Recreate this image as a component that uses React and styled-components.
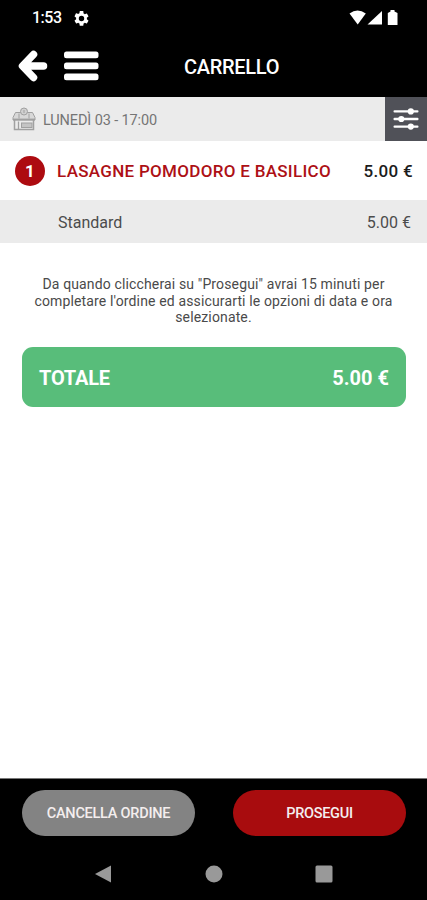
import styled, { createGlobalStyle } from "styled-components";

const GlobalStyle = createGlobalStyle`
  * {
    box-sizing: border-box;
  }
  body {
    margin: 0;
    background: #fff;
    font-family: Roboto, sans-serif;
  }
`;

const Screen = styled.div`
  display: flex;
  flex-direction: column;
  width: 427px;
  height: 900px;
  background: #fff;
`;

// status bar
const StatusBar = styled.div`
  display: flex;
  align-items: center;
  height: 36px;
  padding: 0 28px 0 32px;
  background: #000;
  color: #fff;
`;
const Clock = styled.span`
  font-size: 16px;
  line-height: 36px;
  font-weight: 500;
  letter-spacing: -0.5px;
  margin-right: 12px;
`;
const StatusIcons = styled.div`
  display: flex;
  margin-left: auto;
`;

// header
const Header = styled.header`
  display: flex;
  align-items: center;
  height: 61px;
  padding: 0 18px 2px;
  background: #000;
`;
const HeaderActions = styled.div`
  display: flex;
  align-items: center;
  gap: 16px;
`;
const IconButton = styled.button`
  display: flex;
  padding: 0;
  border: 0;
  background: none;
`;
const Title = styled.h1`
  margin: 2px 0 0 85px;
  color: #fff;
  font-size: 20px;
  line-height: 24px;
  font-weight: 500;
  letter-spacing: -0.3px;
`;

// pickup date
const DateBar = styled.div`
  display: flex;
  align-items: center;
  height: 44px;
  padding-left: 12px;
  background: #ebebeb;
`;
const DateText = styled.span`
  flex: 1;
  margin-left: 7px;
  padding-top: 2px;
  color: #757575;
  font-size: 14.5px;
  letter-spacing: -0.12px;
`;
const FilterButton = styled.button`
  display: flex;
  align-items: center;
  justify-content: center;
  width: 42px;
  height: 44px;
  padding: 0 1px 0 0;
  border: 0;
  background: #505158;
`;

// order lines
const ItemRow = styled.div`
  display: flex;
  align-items: center;
  height: 59px;
  padding: 0 14px 0 15px;
`;
const Quantity = styled.span`
  width: 30px;
  height: 30px;
  margin-right: 12px;
  border-radius: 50%;
  background: #ad0b10;
  color: #fff;
  font-size: 17px;
  line-height: 31px;
  font-weight: 700;
  text-align: center;
`;
const ItemName = styled.span`
  flex: 1;
  color: #ad1015;
  font-size: 17px;
  font-weight: 500;
  letter-spacing: 0.3px;
`;
const ItemPrice = styled.span`
  color: #1c1c1c;
  font-size: 17px;
  font-weight: 500;
  letter-spacing: 0.3px;
`;
const VariantRow = styled.div`
  display: flex;
  align-items: center;
  justify-content: space-between;
  height: 43px;
  padding: 2px 16px 0 58px;
  background: #ebebeb;
  color: #4c4c4c;
  font-size: 16px;
`;

const Note = styled.p`
  margin: 33px 30px 0;
  height: 51px;
  color: #4a4a4a;
  font-size: 14px;
  line-height: 16.6px;
  letter-spacing: 0.14px;
  text-align: center;
`;
const NoteLine = styled.span`
  display: block;
  white-space: nowrap;
`;

const Total = styled.div`
  display: flex;
  align-items: center;
  justify-content: space-between;
  height: 60px;
  margin: 20px 21px 0 22px;
  padding: 2px 17px 0;
  border-radius: 11px;
  background: #58bd7a;
  color: #fff;
  font-size: 20px;
  font-weight: 700;
`;
const TotalLabel = styled.span`
  letter-spacing: -0.2px;
`;

// bottom buttons
const Footer = styled.footer`
  display: flex;
  justify-content: space-between;
  height: 70px;
  margin-top: auto;
  padding: 11px 21px 0 22px;
  border-top: 1px solid #777;
  background: #000;
`;
const Button = styled.button`
  width: 173px;
  height: 46px;
  padding: 1px 0 0;
  border: 0;
  border-radius: 23px;
  background: ${(props) => (props.$primary ? "#a80c0e" : "#838383")};
  color: #f4eeee;
  font-family: inherit;
  font-size: 14.5px;
  font-weight: 500;
  letter-spacing: ${(props) => (props.$primary ? "-0.3px" : "-0.25px")};
`;

const NavBar = styled.nav`
  display: flex;
  align-items: center;
  justify-content: center;
  gap: 92px;
  height: 52px;
  background: #000;
`;

function Gear() {
  return (
    <svg width="15" height="15" viewBox="2 2 20 20" fill="#fff">
      <path d="M19.14 12.94c.04-.3.06-.61.06-.94s-.02-.64-.07-.94l2.03-1.58a.5.5 0 0 0 .12-.61l-1.92-3.32a.49.49 0 0 0-.59-.22l-2.39.96a7 7 0 0 0-1.62-.94l-.36-2.54A.48.48 0 0 0 13.92 2h-3.84a.48.48 0 0 0-.47.41l-.36 2.54c-.59.24-1.13.57-1.62.94l-2.39-.96a.49.49 0 0 0-.59.22L2.74 8.87a.48.48 0 0 0 .12.61l2.03 1.58a6 6 0 0 0 0 1.88l-2.03 1.58a.5.5 0 0 0-.12.61l1.92 3.32c.12.22.37.29.59.22l2.39-.96c.5.38 1.03.7 1.62.94l.36 2.54c.05.24.24.41.48.41h3.84c.24 0 .44-.17.47-.41l.36-2.54a7 7 0 0 0 1.62-.94l2.39.96c.22.08.47 0 .59-.22l1.92-3.32a.48.48 0 0 0-.12-.61zM12 15.6a3.6 3.6 0 1 1 0-7.2 3.6 3.6 0 0 1 0 7.2z" />
    </svg>
  );
}

function Signals() {
  return (
    <svg width="50" height="18" viewBox="0 0 50 18" fill="#fff">
      <path d="M0.500 4.500Q8.500 -1.500 16.800 4.500L8.700 15.500Z" />
      <path d="M33 2V15.500H18.500Z" />
      <path d="M41.500 1H45.500V2.500L48.500 4V16H38.800V4L41.500 2.500Z" />
    </svg>
  );
}

function Arrow() {
  return (
    <svg width="30" height="32" viewBox="0 0 30 32" fill="none">
      <path
        d="M15.500 4.500L4.500 16L15.500 27.500M6 16H25.500"
        stroke="#fff"
        strokeWidth="7.500"
        strokeLinecap="round"
        strokeLinejoin="round"
      />
    </svg>
  );
}

function Menu() {
  return (
    <svg width="35" height="30" viewBox="0 0 35 30" fill="#fff">
      <rect y="0.500" width="34.500" height="6.800" rx="2.500" />
      <rect y="11.500" width="34.500" height="6.800" rx="2.500" />
      <rect y="22.500" width="34.500" height="6.800" rx="2.500" />
    </svg>
  );
}

// shop front with a round sign over the awning
function Store() {
  return (
    <svg width="24" height="24" viewBox="0 0 24 24" fill="none" stroke="#a0a0a0">
      <path d="M3.500 5.500H20.500L23 10.500V13H1V10.500Z" fill="#d8d8d8" />
      <path d="M2.500 13V22.500H21.500V13" strokeWidth="1.500" />
      <path d="M1 12.500H23" strokeWidth="1.800" />
      <path d="M6.500 14.500V22" strokeWidth="1.300" />
      <rect x="9.500" y="16" width="10.500" height="4.500" fill="#c4c4c4" />
      <circle cx="12" cy="4.500" r="3.500" fill="#d0d0d0" />
      <path d="M7 6.500V11.500M17 6.500V11.500M12 3V6" />
    </svg>
  );
}

function Sliders() {
  return (
    <svg width="26" height="24" viewBox="0 0 26 24" fill="#fff">
      <rect x="0.500" y="3.200" width="25" height="2.400" rx="1" />
      <rect x="0.500" y="10.800" width="25" height="2.400" rx="1" />
      <rect x="0.500" y="18.400" width="25" height="2.400" rx="1" />
      <circle cx="17.800" cy="4.400" r="3.100" />
      <circle cx="8.300" cy="12" r="3.100" />
      <circle cx="17.800" cy="19.600" r="3.100" />
    </svg>
  );
}

const note = [
  'Da quando cliccherai su "Prosegui" avrai 15 minuti per',
  "completare l'ordine ed assicurarti le opzioni di data e ora",
  "selezionate.",
];

export default function App() {
  return (
    <Screen>
      <GlobalStyle />
      <StatusBar>
        <Clock>1:53</Clock>
        <Gear />
        <StatusIcons>
          <Signals />
        </StatusIcons>
      </StatusBar>
      <Header>
        <HeaderActions>
          <IconButton>
            <Arrow />
          </IconButton>
          <IconButton>
            <Menu />
          </IconButton>
        </HeaderActions>
        <Title>CARRELLO</Title>
      </Header>
      <DateBar>
        <Store />
        <DateText>LUNEDÌ 03 - 17:00</DateText>
        <FilterButton>
          <Sliders />
        </FilterButton>
      </DateBar>
      <ItemRow>
        <Quantity>1</Quantity>
        <ItemName>LASAGNE POMODORO E BASILICO</ItemName>
        <ItemPrice>5.00 €</ItemPrice>
      </ItemRow>
      <VariantRow>
        <span>Standard</span>
        <span>5.00 €</span>
      </VariantRow>
      <Note>
        {note.map((line) => (
          <NoteLine key={line}>{line}</NoteLine>
        ))}
      </Note>
      <Total>
        <TotalLabel>TOTALE</TotalLabel>
        <span>5.00 €</span>
      </Total>
      <Footer>
        <Button>CANCELLA ORDINE</Button>
        <Button $primary>PROSEGUI</Button>
      </Footer>
      <NavBar>
        <svg width="18" height="18" viewBox="0 0 18 18" fill="#999">
          <path d="M0 9L16 0.500V17.500Z" />
        </svg>
        <svg width="18" height="18" viewBox="0 0 18 18" fill="#999">
          <circle cx="9" cy="9" r="8.500" />
        </svg>
        <svg width="18" height="18" viewBox="0 0 18 18" fill="#999">
          <rect x="0.500" y="0.500" width="17" height="17" rx="1.500" />
        </svg>
      </NavBar>
    </Screen>
  );
}
